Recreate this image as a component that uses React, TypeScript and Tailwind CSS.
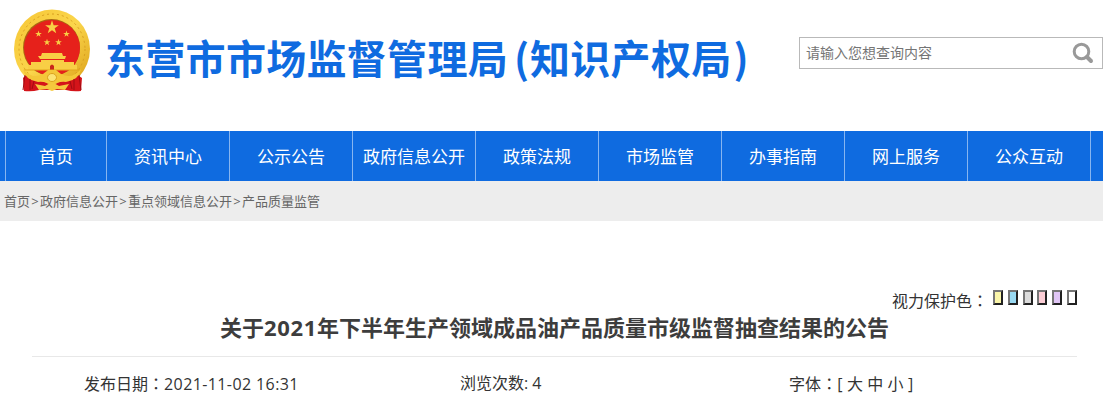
const nav = ['资讯中心', '公示公告', '政府信息公开', '政策法规', '市场监管', '办事指南', '网上服务', '公众互动'];
const crumbs = ['首页', '政府信息公开', '重点领域信息公开', '产品质量监管'];
const swatches = ['bg-[#faf5a9]', 'bg-[#99d9f2]', 'bg-[#dcdcdc]', 'bg-[#fbcdd5]', 'bg-[#e0c5f5]', 'bg-white'];

const star = (cx: number, cy: number, r: number) =>
  Array.from({ length: 10 }, (_, i) => {
    const a = -Math.PI / 2 + (i * Math.PI) / 5;
    const q = i % 2 ? r * 0.39 : r;
    return `${(cx + q * Math.cos(a)).toFixed(2)},${(cy + q * Math.sin(a)).toFixed(2)}`;
  }).join(' ');

function Emblem() {
  return (
    <svg width="78" height="84" viewBox="0 0 78 84" className="block shrink-0">
      <defs>
        <linearGradient id="gold" x1="0" y1="0" x2="1" y2="1">
          <stop offset="0" stopColor="#f6c635" />
          <stop offset=".5" stopColor="#fbd64c" />
          <stop offset="1" stopColor="#d99c14" />
        </linearGradient>
      </defs>
      <ellipse cx="39" cy="40" rx="38" ry="39.5" fill="url(#gold)" />
      <ellipse cx="39" cy="40" rx="33" ry="35" fill="none" stroke="#d99f20" strokeWidth="1" strokeDasharray="2 3" />
      <circle cx="38.5" cy="38.5" r="28.5" fill="#a96a12" />
      <circle cx="39" cy="39" r="28" fill="#e6211b" />
      <g fill="#f8cf45">
        <polygon points={star(39, 18.5, 7.2)} />
        <polygon points={star(25.5, 25, 3.5)} />
        <polygon points={star(53.5, 25, 3.5)} />
        <polygon points={star(34, 33.3, 3.5)} />
        <polygon points={star(45.5, 33.3, 3.5)} />
        <path d="M29 44h20l1 3h3l-1 3H27l-2-3h3z" />
        <path d="M28 51h23v2h10v3h3v5H15v-5h3v-3h10z" />
      </g>
      <path d="M37 61v-4q2-3 4 0v4z" fill="#c9281b" />
      <path d="M11 61h56" stroke="#e1a51d" />
      <path d="M12 67q9 0 18 5l9 5 9-5q9-5 18-5l3 2-1 13q-8 1-15-1H26q-7 2-15 1l-1-13z" fill="#d4141a" />
      <path d="M10 60q9 11 20 5l5-4h8l5 4q11 6 20-5-2 11-15 13-8-1-14 4-6-5-14-4-13-2-15-13z" fill="#f4c739" />
      <ellipse cx="39" cy="68.5" rx="4.5" ry="4" fill="#fce474" stroke="#dca31d" />
      <path d="M22 75l10 2 7-4 7 4 10-2-4 6-8-1-5 2-5-2-8 1z" fill="#f5c83d" />
      <path d="M12 66q-1 8-2 15M17 70v11M21 72l-2 8M66 66q1 8 2 15M61 70v11M57 72l2 8" stroke="#9f0b12" strokeWidth="1" fill="none" />
    </svg>
  );
}

const Colon = () => <span className="font-['Noto_Sans_CJK_TC',sans-serif]">：</span>;

export default function App() {
  return (
    <div className="h-[405px] w-[1103px] overflow-hidden bg-white font-['Open_Sans','Noto_Sans_CJK_SC',sans-serif] whitespace-nowrap text-[#333]">
      <header className="flex h-[131px] items-start">
        <div className="flex pt-[9px] pl-[13px]">
          <Emblem />
          <h1 className="ml-[14px] flex h-[96px] items-center font-['Noto_Sans_CJK_SC',sans-serif] text-[40px] leading-none font-bold tracking-[0.3px] text-[#0f6be0]">
            东营市市场监督管理局
            <span className="ml-[6px] w-[16px]">(</span>
            知识产权局
            <span className="ml-[2px]">)</span>
          </h1>
        </div>
        <div className="mt-[37px] ml-auto flex h-[32px] w-[304px] items-center justify-between border border-[#b9b9b9] pr-[8px] pl-[6px]">
          <span className="text-[14px] leading-none text-[#757575]">请输入您想查询内容</span>
          <svg width="22" height="22" viewBox="0 0 22 22" fill="none" stroke="#999" className="shrink-0">
            <circle cx="9.5" cy="9.5" r="7.3" strokeWidth="3" />
            <path d="M15 15l4 4" strokeWidth="4" strokeLinecap="round" />
          </svg>
        </div>
      </header>

      <nav className="flex h-[50px] bg-[#0f6be0] pl-[5px] text-[17px] leading-none text-white">
        <a className="flex w-[101px] items-center justify-center border-l border-[#87b5f0]">首页</a>
        {nav.map((t) => (
          <a key={t} className="flex w-[123px] items-center justify-center border-l border-[#87b5f0]">{t}</a>
        ))}
        <span className="border-l border-[#87b5f0]" />
      </nav>

      <div className="flex h-[40px] items-center bg-[#ededed] pl-[4px] text-[13px] leading-none text-[#666]">
        {crumbs.map((t, i) => (
          <span key={t} className="flex">
            {i > 0 && <span className="w-[10px] text-center">&gt;</span>}
            {t}
          </span>
        ))}
      </div>

      <main className="px-[32px] pt-[67px]">
        <div className="-mr-[6px] flex h-[22px] items-start justify-end pr-[6px]">
          <span className="mt-[3px] mr-[5px] text-[16px] leading-[18px]">视力保护色<Colon /></span>
          <div className="mt-[2px] mr-[-6px] flex w-[84px] justify-between">
            {swatches.map((c) => (
              <span key={c} className={`h-[15px] w-[10px] border-2 border-t-[#767676] border-r-[#212121] border-b-[#212121] border-l-[#767676] ${c}`} />
            ))}
          </div>
        </div>
        <h2 className="flex h-[47px] w-[1045px] items-start justify-center border-b border-[#e8e8e8] pt-[6px] text-[22px] leading-[22px] font-bold text-[#3d3d3d]">
          关于<span className="tracking-[0.7px]">2021</span>年下半年生产领域成品油产品质量市级监督抽查结果的公告
        </h2>
        <div className="flex h-[52px] items-center pl-[52px] text-[16px] leading-none">
          <span className="w-[376px]">发布日期<Colon /><span className="tracking-[0.4px]">2021-11-02 16:31</span></span>
          <span className="w-[329px]">浏览次数: 4</span>
          <span className="tracking-[0.1px]">字体<Colon />[ 大 中 小 ]</span>
        </div>
      </main>
    </div>
  );
}
